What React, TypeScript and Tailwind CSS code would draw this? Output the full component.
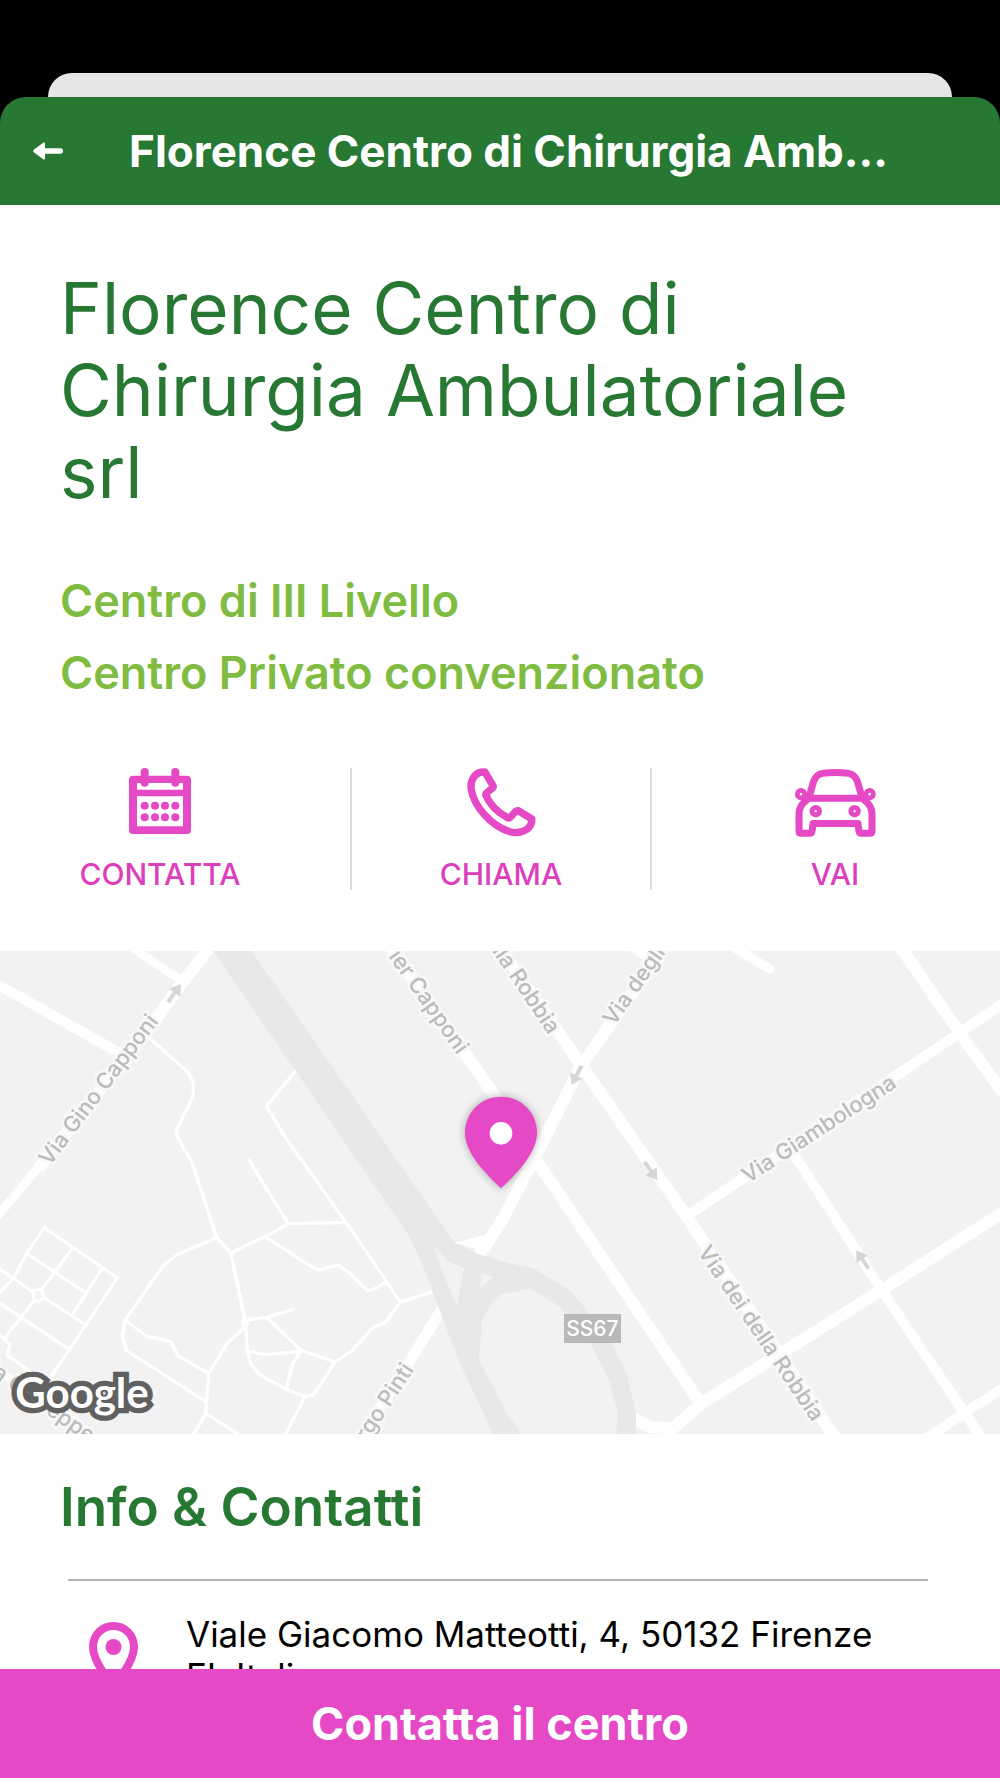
import type { ReactNode } from 'react';

const BackArrow = () => {
  return (
    <svg width="30" height="18" viewBox="0 0 30 18" fill="currentColor">
      <path d="M10.5 0.6 Q12 0 12 1.6 V6.2 H27.5 Q30 6.2 30 9 Q30 11.8 27.5 11.8 H12 V16.4 Q12 18 10.5 17.4 L1 10.4 Q-0.6 9 1 7.6 Z" />
    </svg>
  );
};

const CalendarIcon = () => {
  return (
    <svg width="62" height="66" viewBox="210 53 186 198" fill="currentColor">
      <path
        fillRule="evenodd"
        d="M222 76 H384 Q396 76 396 88 V239 Q396 251 384 251 H222 Q210 251 210 239 V88 Q210 76 222 76 Z M234 98 V118 H372 V98 Z M234 138 V228 H372 V138 Z"
      />
      <rect x="245" y="53" width="24" height="56" rx="12" />
      <rect x="337" y="53" width="24" height="56" rx="12" />
      {[257, 288, 318, 349].map((x) => (
        <g key={x}>
          <circle cx={x} cy="166" r="12" />
          <circle cx={x} cy="201" r="12" />
        </g>
      ))}
    </svg>
  );
};

const PhoneIcon = () => {
  return (
    <svg
      width="69"
      height="69"
      viewBox="137 55 206 207"
      fill="none"
      stroke="currentColor"
      strokeWidth="22"
      strokeLinejoin="round"
      strokeLinecap="round"
    >
      <path d="M190 67 Q170 66 160 78 Q146 95 149 118 Q156 160 190 196 Q225 235 268 247 Q295 253 318 238 Q332 226 331 208 L290 183 Q286 182 283 185 L265 204 Q262 206 258 204 Q212 180 193 137 Q192 132 195 130 L213 115 Q217 111 214 107 Z" />
    </svg>
  );
};

const CarIcon = () => {
  return (
    <svg
      width="81"
      height="69"
      viewBox="1127 56 242 206"
      fill="none"
      stroke="currentColor"
      strokeWidth="21"
      strokeLinejoin="round"
    >
      <path d="M1168 146 L1183 95 Q1190 76 1208 72 Q1248 67 1288 72 Q1306 76 1313 95 L1328 146 Z" />
      <path d="M1165 149 Q1139 168 1139 192 V244 Q1139 251 1146 251 H1170 Q1177 251 1178 244 L1181 222 H1315 L1318 244 Q1319 251 1326 251 H1350 Q1357 251 1357 244 V192 Q1357 168 1331 149" />
      <circle cx="1189" cy="185" r="11" strokeWidth="15" />
      <circle cx="1305" cy="185" r="11" strokeWidth="15" />
      <circle cx="1145" cy="134" r="11" strokeWidth="14" />
      <circle cx="1350" cy="134" r="11" strokeWidth="14" />
    </svg>
  );
};

const PlaceIcon = () => {
  return (
    <svg width="49" height="70" viewBox="0 0 49 70">
      <path
        d="M24.5 4 C13 4 4 13 4 25 C4 41 24.5 64 24.5 64 C24.5 64 45 41 45 25 C45 13 36 4 24.5 4 Z"
        fill="none"
        stroke="currentColor"
        strokeWidth="8"
      />
      <circle cx="24.5" cy="25" r="8" fill="currentColor" />
    </svg>
  );
};

const streetLabels = [
  { text: 'Via Gino Capponi', x: 149, y: 680, angle: -53, anchor: 'start' },
  { text: 'ier Capponi', x: 1372, y: 346, angle: 55, anchor: 'end' },
  { text: 'lla Robbia', x: 1646, y: 286, angle: 56, anchor: 'end' },
  { text: 'Via degli', x: 1842, y: 260, angle: -55, anchor: 'start' },
  { text: 'Via Giambologna', x: 2244, y: 731, angle: -33, anchor: 'start' },
  { text: 'Via dei della Robbia', x: 2092, y: 936, angle: 56, anchor: 'start' },
  { text: 'rgo Pinti', x: 1243, y: 1288, angle: -57, anchor: 'end' },
  { text: 'Via Giuseppe', x: -78, y: 1270, angle: 35, anchor: 'start' },
] as const;

const arrows = [
  { x: 523, y: 160, angle: -54 },
  { x: 1730, y: 405, angle: 118 },
  { x: 1952, y: 692, angle: 55 },
  { x: 2588, y: 959, angle: -124 },
];

const Street_map = () => {
  return (
    <svg
      className="block h-[483px] w-full bg-[#f2f2f2]"
      viewBox="0 33 3000 1449"
      preserveAspectRatio="xMidYMid slice"
      role="img"
      aria-label="Mappa"
    >
      {/* park paths */}
      <g fill="none" stroke="#ffffff" strokeWidth="10" strokeLinejoin="round" strokeLinecap="round">
        <path d="M450 295 L562 395 L580 428 V468 L527 575 L530 588 L575 665 L650 893 L692 938 L736 1145 L742 1230 L752 1272 L778 1303 L858 1348 L915 1370 L857 1482" />
        <path d="M884 396 L799 500 L855 590 L1040 850 L1160 1025 L1201 1087 L1295 1056" />
        <path d="M746 660 L865 851 L1038 848" />
        <path d="M692 938 L795 890 L865 851" />
        <path d="M795 890 L935 980 L958 990 L1015 975 L1050 1000 L1102 1052 L1126 1046 L1160 1025" />
        <path d="M650 893 L535 942 L491 975 L375 1140 L367 1190 L379 1232 L617 1384" />
        <path d="M375 1140 L440 1188 L511 1204 L535 1248 L626 1300 L680 1211 L736 1160" />
        <path d="M626 1300 L617 1420 L582 1482 M617 1420 L715 1482" />
        <path d="M740 1140 L800 1132 L877 1109 M800 1132 L903 1231 L1005 1266 L1053 1235 L1122 1160 L1156 1148 L1201 1087" />
        <path d="M745 1234 L795 1244 L903 1234 L878 1270 L860 1345" />
        <path d="M1005 1266 L940 1365 L915 1370" />
        <path d="M133 863 L352 1014 L150 1315 M133 863 L80 940 L40 1016 L0 1058 M80 940 L255 1057 M220 922 L125 1048 M308 983 L216 1127" />
        <path d="M0 988 L98 1055 M130 1072 L260 1156 M100 1052 L125 1048 L131 1072 L118 1085 L102 1080 Z M102 1083 L16 1192" />
        <path d="M0 1090 L210 1230 M0 1185 L30 1212 L22 1246 L140 1330" />
        <circle cx="736" cy="1148" r="8" />
      </g>

      {/* streets */}
      <g fill="none" stroke="#ffffff" strokeWidth="36" strokeLinejoin="round">
        <path d="M-10 132 L375 348" strokeWidth="31" />
        <path d="M400 25 L545 122" strokeWidth="25" />
        <path d="M640 10 L545 130 L470 235 L115 685" />
        <path d="M125 670 L-10 832" strokeWidth="26" />
        <path d="M-10 1290 L220 1440" strokeWidth="26" />
        <path d="M1150 -10 L1500 490 L1608 660 L2105 1395" />
        <path d="M1480 -5 L1740 370 L2060 830 L2510 1500" />
        <path d="M2055 832 L2880 278 L3010 190" strokeWidth="31" />
        <path d="M2690 5 L2880 280 L3010 460" />
        <path d="M2380 640 L2645 1050 L2895 1420 L2945 1495" strokeWidth="30" />
        <path d="M3010 816 L2645 1050 L2105 1390 L2020 1464 L1950 1462 L1895 1430" />
        <path d="M2780 1495 L2895 1418 L3010 1344" strokeWidth="30" />
        <path d="M2190 15 L2310 88" strokeWidth="28" strokeLinecap="round" />
        <path d="M1900 25 L1950 60" strokeWidth="24" />
        <path d="M2010 0 L1745 375 L1610 640 L1510 835 L1430 955" />
        <path d="M1330 1100 L1225 1270 L1085 1490" strokeWidth="32" />
      </g>
      <path d="M1365 908 L1455 885 L1500 825 L1470 940 Z" fill="#ffffff" />

      {/* main road */}
      <path
        fill="#e8e8e8"
        fillRule="evenodd"
        d="M640 33 L1225 885 L1270 980 L1375 1260 L1480 1482 H1565 L1520 1420 L1500 1380 L1437 1260 L1447 1140 L1477 1085 L1500 1065 L1590 1045 L1680 1100 L1770 1208 L1825 1315 L1855 1420 L1848 1482 H1908 V1420 L1880 1300 L1830 1200 L1770 1122 L1715 1055 L1605 988 L1500 962 L1430 940 L1365 908 L1330 860 L755 33 Z M1298 915 L1345 965 L1393 985 L1370 1100 L1320 975 Z M1446 1003 L1482 1011 L1440 1043 Z"
      />

      {arrows.map((a) => (
        <path
          key={a.x}
          d="M-32 -6 H2 V-21 L34 0 L2 21 V6 H-32 Z"
          fill="#d6d6d6"
          transform={`translate(${a.x} ${a.y}) rotate(${a.angle})`}
        />
      ))}

      <g
        fill="#bbbbbb"
        stroke="#f8f8f8"
        strokeWidth="16"
        strokeLinejoin="round"
        paintOrder="stroke"
        fontSize="66"
        fontFamily="Inter, sans-serif"
        fontWeight="500"
      >
        {streetLabels.map((l) => (
          <text
            key={l.text}
            textAnchor={l.anchor}
            transform={`translate(${l.x} ${l.y}) rotate(${l.angle})`}
          >
            {l.text}
          </text>
        ))}
      </g>

      <rect x="1692" y="1122" width="171" height="87" fill="#b9b9b9" />
      <text
        x="1777"
        y="1187"
        textAnchor="middle"
        fill="#ffffff"
        fontSize="63"
        fontFamily="Inter, sans-serif"
        fontWeight="500"
      >
        SS67
      </text>

      <text
        x="46"
        y="1403"
        fill="#ffffff"
        stroke="#606060"
        strokeWidth="32"
        paintOrder="stroke"
        fontSize="126"
        fontFamily="Lato, sans-serif"
        fontWeight="700"
      >
        Google
      </text>

      <path
        className="drop-shadow-[0_0_12px_#00000050]"
        fill="#e649c5"
        d="M1503 470 C1443 470 1395 518 1395 578 C1395 630 1440 686 1503 745 C1566 686 1611 630 1611 578 C1611 518 1563 470 1503 470 Z"
      />
      <circle cx="1503" cy="580" r="34" fill="#ffffff" />
    </svg>
  );
};

const Action = ({ icon, label, href }: { icon: ReactNode; label: string; href: string }) => {
  return (
    <a href={href} className="flex flex-col items-center gap-5 text-[#e649c5]">
      <span className="flex h-[70px] items-start">{icon}</span>
      <span className="text-[30px] leading-8 font-medium text-[#dc3fbb]">{label}</span>
    </a>
  );
};

const App = () => {
  return (
    <div className="flex h-screen flex-col bg-black font-['Inter',sans-serif]">
      <div className="mx-12 mt-[73px] h-6 shrink-0 rounded-t-[24px] bg-[#e6e6e6]"></div>

      <header className="flex h-[108px] shrink-0 items-center rounded-t-[26px] bg-[#277832] pr-8 pl-[33px] text-white">
        <button type="button" aria-label="Indietro" className="w-16">
          <BackArrow />
        </button>
        <h6 className="flex-1 pr-12 text-center text-[44px] leading-[54px] font-bold whitespace-nowrap">
          Florence Centro di Chirurgia Amb...
        </h6>
      </header>

      <main className="min-h-0 flex-1 overflow-y-auto bg-white [scrollbar-width:none]">
        <div className="px-[60px] pt-[62px]">
          <h1 className="pr-8 text-[71px] leading-[82px] text-[#277832]">
            Florence Centro di Chirurgia Ambulatoriale srl
          </h1>
          <div className="mt-[52px] text-[45px] leading-[72px] font-semibold text-[#80bc41]">
            <p>Centro di III Livello</p>
            <p>Centro Privato convenzionato</p>
          </div>
        </div>

        <div className="mt-[59px] grid grid-cols-[32fr_35fr_33fr]">
          <Action icon={<CalendarIcon />} label="CONTATTA" href="#contatta" />
          <div className="mr-[18px] ml-[30px] border-x-2 border-[#dddddd]">
            <Action icon={<PhoneIcon />} label="CHIAMA" href="#chiama" />
          </div>
          <Action icon={<CarIcon />} label="VAI" href="#vai" />
        </div>

        <div className="mt-[61px]">
          <Street_map />
        </div>

        <div className="px-[60px] pt-[43px]">
          <h2 className="text-[53px] leading-[60px] font-semibold text-[#277832]">
            Info &amp; Contatti
          </h2>
          <hr className="mt-[42px] mr-3 ml-2 border-t-2 border-[#b3b3b3]" />
          <div className="mt-8 flex items-start gap-12 pr-16 pl-[29px]">
            <span className="mt-[9px] shrink-0 text-[#e649c5]">
              <PlaceIcon />
            </span>
            <p className="text-[35px] leading-[42px] text-black">
              Viale Giacomo Matteotti, 4, 50132 Firenze FI, Italia
            </p>
          </div>
        </div>
      </main>

      <button
        type="button"
        className="h-[109px] shrink-0 bg-[#e649c5] text-[45px] leading-[54px] font-bold text-white"
      >
        Contatta il centro
      </button>
    </div>
  );
};

export default App;
